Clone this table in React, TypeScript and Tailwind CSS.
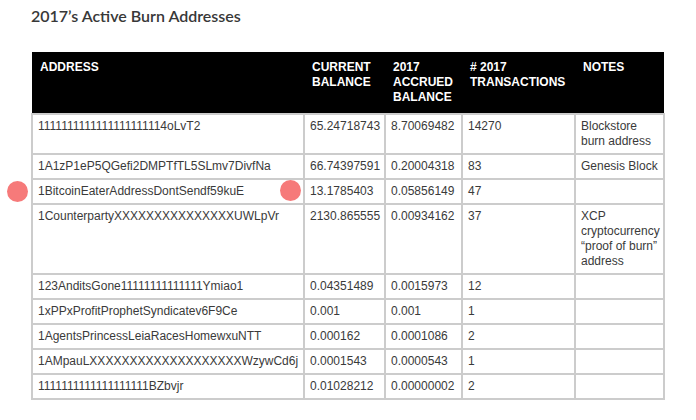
const rows = [
  { address: '1111111111111111111114oLvT2', current: '65.24718743', accrued: '8.70069482', tx: '14270', notes: 'Blockstore burn address' },
  { address: '1A1zP1eP5QGefi2DMPTfTL5SLmv7DivfNa', current: '66.74397591', accrued: '0.20004318', tx: '83', notes: 'Genesis Block' },
  { address: '1BitcoinEaterAddressDontSendf59kuE', current: '13.1785403', accrued: '0.05856149', tx: '47', notes: '' },
  { address: '1CounterpartyXXXXXXXXXXXXXXXUWLpVr', current: '2130.865555', accrued: '0.00934162', tx: '37', notes: 'XCP cryptocurrency “proof of burn” address' },
  { address: '123AnditsGone11111111111111Ymiao1', current: '0.04351489', accrued: '0.0015973', tx: '12', notes: '' },
  { address: '1xPPxProfitProphetSyndicatev6F9Ce', current: '0.001', accrued: '0.001', tx: '1', notes: '' },
  { address: '1AgentsPrincessLeiaRacesHomewxuNTT', current: '0.000162', accrued: '0.0001086', tx: '2', notes: '' },
  { address: '1AMpauLXXXXXXXXXXXXXXXXXXXWzywCd6j', current: '0.0001543', accrued: '0.0000543', tx: '1', notes: '' },
  { address: '1111111111111111111BZbvjr', current: '0.01028212', accrued: '0.00000002', tx: '2', notes: '' },
];

const headers = ['Address', 'Current Balance', '2017 Accrued Balance', '# 2017 Transactions', 'Notes'];

const App = () => {
  return (
    <div className="relative w-[696px] h-[420px] bg-white px-[31px] pt-[6px]">
      {/* Title */}
      <h2 className="font-['Lato','Liberation_Sans',sans-serif] font-semibold text-[16px] leading-[20px] text-[#383838]">
        2017’s Active Burn Addresses
      </h2>

      {/* Table */}
      <table className="mt-[26px] w-[632px] table-fixed border-collapse font-['Liberation_Sans',Arial,sans-serif] text-[12px] leading-[15px] text-[#3a3a3a]">
        <colgroup>
          <col className="w-[272px]" />
          <col className="w-[81px]" />
          <col className="w-[77px]" />
          <col className="w-[113px]" />
          <col className="w-[89px]" />
        </colgroup>
        <thead>
          <tr className="bg-black">
            {headers.map((h) => (
              <th
                key={h}
                className="h-[62px] px-[8px] pt-[8px] pb-[8px] align-top text-left font-bold uppercase text-white"
              >
                {h}
              </th>
            ))}
          </tr>
        </thead>
        <tbody>
          {rows.map((r) => (
            <tr key={r.address}>
              <td className="border-2 border-[#cccccc] px-[5px] py-[4px] align-top whitespace-nowrap">{r.address}</td>
              <td className="border-2 border-[#cccccc] px-[5px] py-[4px] align-top">{r.current}</td>
              <td className="border-2 border-[#cccccc] px-[5px] py-[4px] align-top">{r.accrued}</td>
              <td className="border-2 border-[#cccccc] px-[5px] py-[4px] align-top">{r.tx}</td>
              <td className="border-2 border-[#cccccc] px-[5px] py-[4px] align-top">{r.notes}</td>
            </tr>
          ))}
        </tbody>
      </table>

      {/* Markers */}
      <div className="absolute left-[7px] top-[181px] w-[21px] h-[21px] rounded-full bg-[#f67a7a]" />
      <div className="absolute left-[280px] top-[180px] w-[21px] h-[21px] rounded-full bg-[#f67a7a]" />
    </div>
  );
};

export default App;
